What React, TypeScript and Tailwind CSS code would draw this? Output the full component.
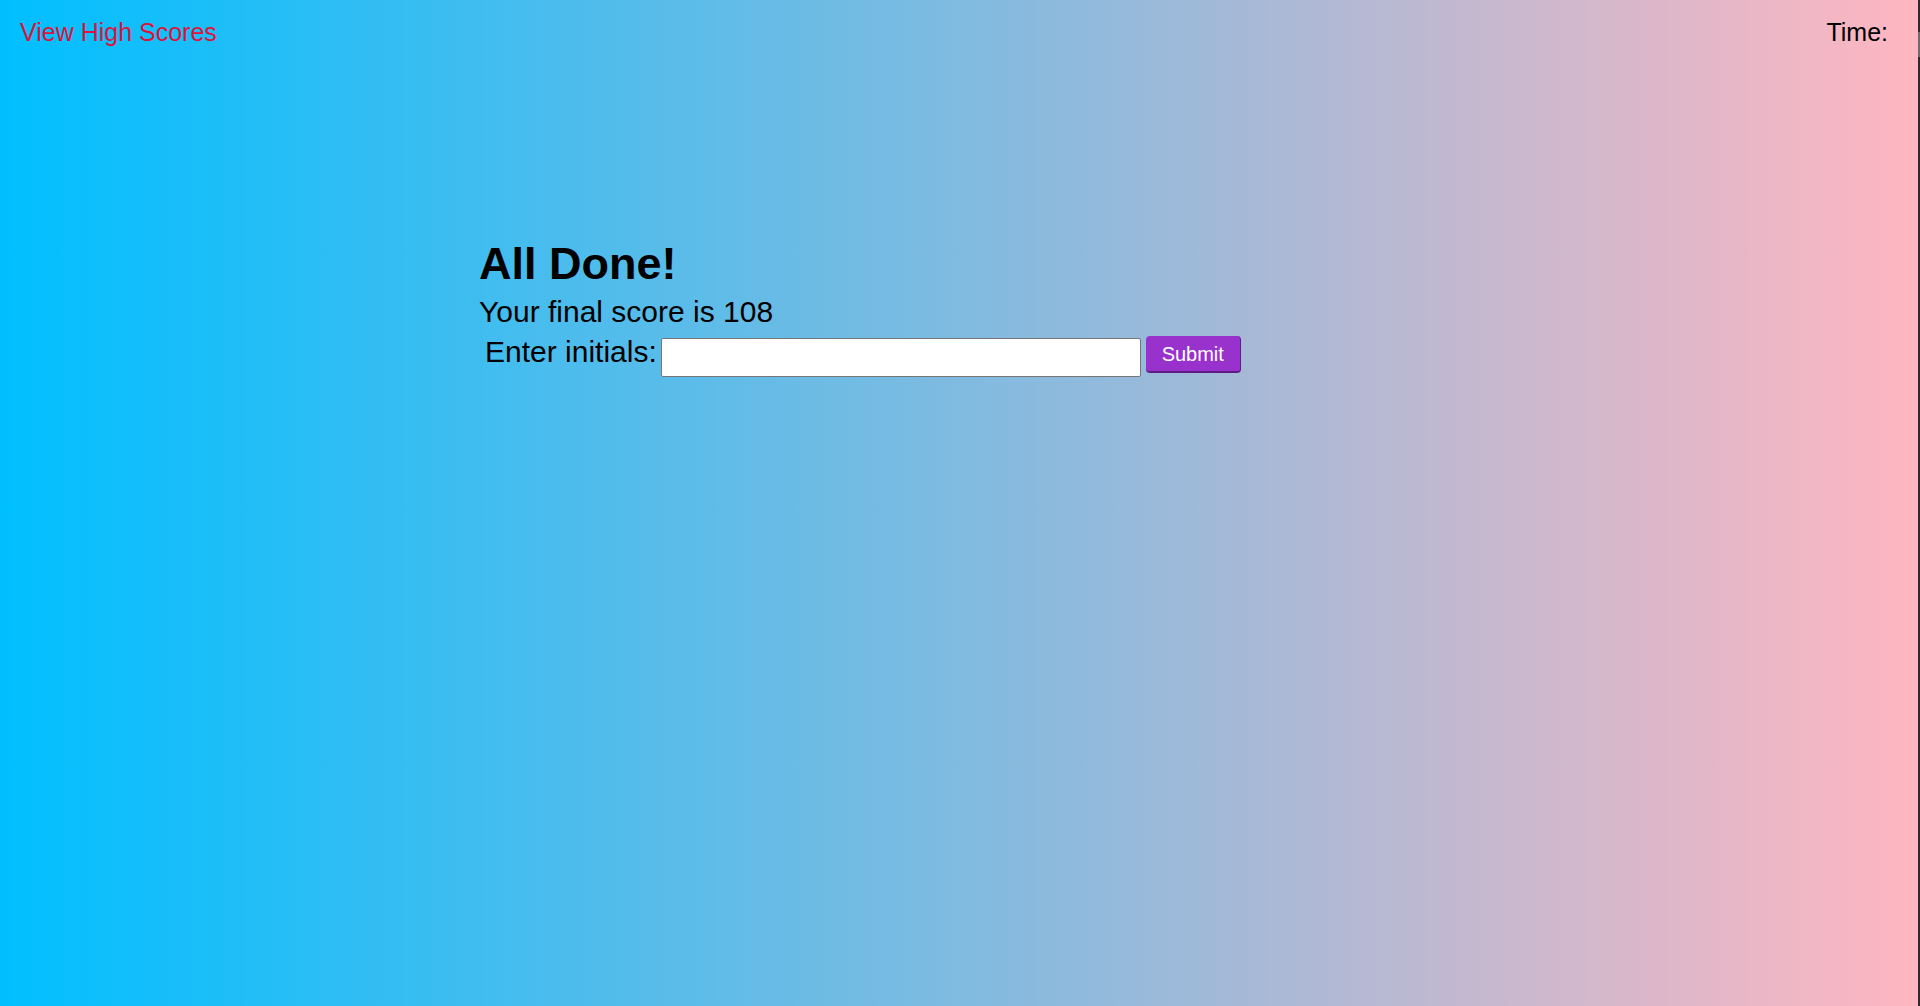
import { useState } from 'react';

export default function App() {
  const [initials, setInitials] = useState('');

  return (
    <div className="flex h-[1006px] w-full overflow-hidden font-['Liberation_Sans',Arial,sans-serif]">
      <div className="flex-1 bg-[linear-gradient(to_right,#00bfff,#ffb6c1)]">
        {/* Header */}
        <header className="flex items-start justify-between pl-[20px] pr-[30px] pt-[18px] text-[25px] leading-[28px]">
          <a href="#" className="text-[#dc143c]">View High Scores</a>
          <p className="text-black">Time: </p>
        </header>

        {/* Final score */}
        <section className="ml-[479px] mt-[193px] text-black">
          <h1 className="text-[45px] font-bold leading-[50px]">All Done!</h1>
          <p className="mt-[6px] text-[30px] leading-[34px]">Your final score is 108</p>
          <form
            className="mt-[5px] flex items-start"
            onSubmit={(e) => e.preventDefault()}
          >
            <label htmlFor="initials" className="mt-[1px] pl-[6px] pr-[4px] text-[30px] leading-[34px]">
              Enter initials:
            </label>
            <input
              id="initials"
              value={initials}
              onChange={(e) => setInitials(e.target.value)}
              className="mt-[4px] h-[39px] w-[480px] rounded-[2px] border border-[#767676] bg-white px-2 text-[20px] outline-none"
            />
            <button
              type="submit"
              className="ml-[5px] mt-[2px] h-[37px] w-[95px] rounded-[4px] border-r border-b-2 border-[#5e1d82] bg-[#9932cc] text-[20px] leading-[24px] text-white"
            >
              Submit
            </button>
          </form>
        </section>
      </div>
      {/* scrollbar edge */}
      <div className="w-[2px] bg-[#2b2b2b] pt-[32px]">
        <div className="h-[25px] w-full bg-[#6b6b6b]" />
      </div>
    </div>
  );
}
